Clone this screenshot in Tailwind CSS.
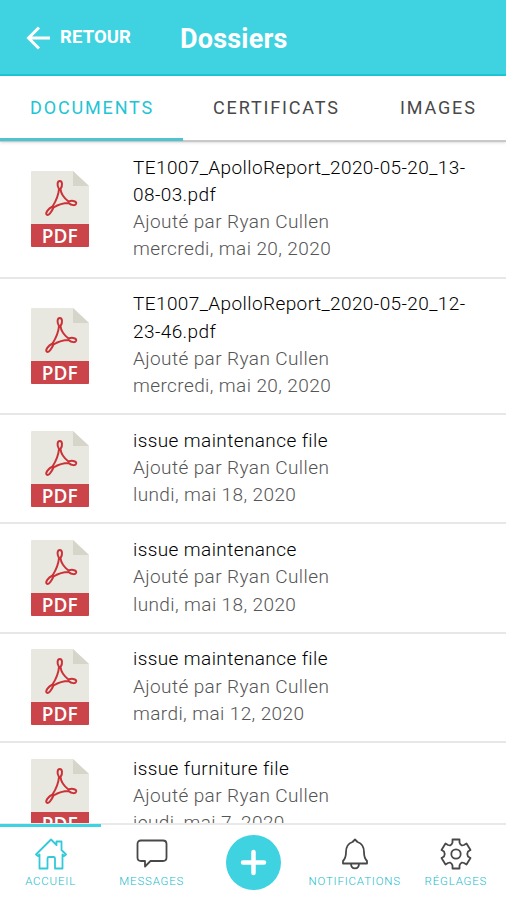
<!DOCTYPE html>
<html lang="fr">

<head>
    <meta charset="UTF-8">
    <meta name="viewport" content="width=device-width, initial-scale=1.0">
    <title>Dossiers</title>
    <script src="https://cdn.jsdelivr.net/npm/@tailwindcss/browser@4"></script>
</head>

<body class="h-screen flex flex-col overflow-hidden bg-white font-['Roboto',sans-serif]">

    <!-- Shared PDF file icon -->
    <svg class="hidden">
        <symbol id="pdf" viewBox="0 0 58 76">
            <path d="M1 0H42L58 15V75a1 1 0 0 1-1 1H1a1 1 0 0 1-1-1V1a1 1 0 0 1 1-1Z" fill="#e9e8e0" />
            <path d="M42 0L58 15H42Z" fill="#d6d5ca" />
            <path d="M0 53H58V75a1 1 0 0 1-1 1H1a1 1 0 0 1-1-1Z" fill="#cb4449" />
            <g fill="none" stroke="#cb3238" stroke-width="2" stroke-linejoin="round">
                <path d="M28 18C25.500 14 26.500 10 28.800 10C31.200 10 32 14 29.500 18C30 23 33 27 37.500 30.500C42 29 45.500 30.500 45.200 32.500C44.700 35 40.500 34.500 37.500 32C32 32 27.500 33.500 22.500 36.500C20.500 41 17.500 45 15.800 43.800C14 42.500 17 37.500 21.500 35.500C25 30 27.500 24.500 28 18Z" />
            </g>
            <text x="28.700" y="71.500" text-anchor="middle" font-family="Open Sans, sans-serif" font-size="19"
                font-weight="600" letter-spacing="0" fill="#fff">PDF</text>
        </symbol>
    </svg>

    <!-- Header -->
    <header class="flex items-center h-[76px] shrink-0 bg-[#3fd2e1] border-b-2 border-[#1cc8d8] text-white">
        <svg class="w-6 h-6 ml-[26px] mt-[2px]" viewBox="0 0 24 24" fill="none" stroke="currentColor" stroke-width="3">
            <path d="M13 1.500L2.500 12L13 22.500M2.500 12H24" />
        </svg>
        <span class="ml-[10px] pt-[2px] w-[120px] text-[18.500px] font-bold tracking-[0.100px]">RETOUR</span>
        <h1 class="pt-[4px] text-[27px] font-bold tracking-[0.200px]">Dossiers</h1>
    </header>

    <!-- Tabs -->
    <nav class="relative z-10 flex h-[66px] shrink-0 border-b-2 border-[#c8c8c8] shadow-sm text-[18px] tracking-[1.850px] text-[#484848]">
        <a class="relative flex items-center w-[183px] pl-[30px] pb-[2px] text-[#22c4d4]">DOCUMENTS
            <span class="absolute left-0 -bottom-[1px] w-full h-[3px] bg-[#4fc4d0]"></span>
        </a>
        <a class="flex items-center w-[187px] pl-[30px] pb-[2px]">CERTIFICATS</a>
        <a class="flex items-center pl-[30px] pb-[2px]">IMAGES</a>
    </nav>

    <!-- Documents -->
    <main class="flex-1 min-h-0 overflow-hidden text-[19px] leading-[27.200px] font-light tracking-[0.400px] text-[#555]">
        <div class="flex items-center h-[136.500px] border-b-2 border-[#e7e7e7]">
            <svg class="w-[58px] h-[76px] ml-[31px] mr-[44px] shrink-0"><use href="#pdf" /></svg>
            <div class="pb-[2px]">
                <p class="text-black">TE1007_ApolloReport_2020-05-20_13-<br>08-03.pdf</p>
                <p>Ajouté par Ryan Cullen</p>
                <p>mercredi, mai 20, 2020</p>
            </div>
        </div>
        <div class="flex items-center h-[136.500px] border-b-2 border-[#e7e7e7]">
            <svg class="w-[58px] h-[76px] ml-[31px] mr-[44px] shrink-0"><use href="#pdf" /></svg>
            <div class="pb-[2px]">
                <p class="text-black">TE1007_ApolloReport_2020-05-20_12-<br>23-46.pdf</p>
                <p>Ajouté par Ryan Cullen</p>
                <p>mercredi, mai 20, 2020</p>
            </div>
        </div>
        <div class="flex items-center h-[109.300px] border-b-2 border-[#e7e7e7]">
            <svg class="w-[58px] h-[76px] ml-[31px] mr-[44px] shrink-0"><use href="#pdf" /></svg>
            <div class="pb-[2px]">
                <p class="text-black">issue maintenance file</p>
                <p>Ajouté par Ryan Cullen</p>
                <p>lundi, mai 18, 2020</p>
            </div>
        </div>
        <div class="flex items-center h-[109.300px] border-b-2 border-[#e7e7e7]">
            <svg class="w-[58px] h-[76px] ml-[31px] mr-[44px] shrink-0"><use href="#pdf" /></svg>
            <div class="pb-[2px]">
                <p class="text-black">issue maintenance</p>
                <p>Ajouté par Ryan Cullen</p>
                <p>lundi, mai 18, 2020</p>
            </div>
        </div>
        <div class="flex items-center h-[109.300px] border-b-2 border-[#e7e7e7]">
            <svg class="w-[58px] h-[76px] ml-[31px] mr-[44px] shrink-0"><use href="#pdf" /></svg>
            <div class="pb-[2px]">
                <p class="text-black">issue maintenance file</p>
                <p>Ajouté par Ryan Cullen</p>
                <p>mardi, mai 12, 2020</p>
            </div>
        </div>
        <div class="flex items-center h-[109.300px] border-b-2 border-[#e7e7e7]">
            <svg class="w-[58px] h-[76px] ml-[31px] mr-[44px] shrink-0"><use href="#pdf" /></svg>
            <div class="pb-[2px]">
                <p class="text-black">issue furniture file</p>
                <p>Ajouté par Ryan Cullen</p>
                <p>jeudi, mai 7, 2020</p>
            </div>
        </div>
    </main>

    <!-- Bottom bar -->
    <footer class="relative grid grid-cols-5 h-[77px] shrink-0 border-t-2 border-[#e9e9e9] bg-white text-[11.500px] leading-4 tracking-[0.800px] font-light text-[#22bccb]">
        <span class="absolute left-0 -top-px w-[101px] h-[3px] bg-[#3fd2e1]"></span>
        <a class="flex flex-col items-center pt-[13px]">
            <svg class="w-8 h-8" viewBox="0 0 32 32" fill="none" stroke="#32c9d9" stroke-width="1.800" stroke-linejoin="round" stroke-linecap="round">
                <path d="M1 16.500L16 1.500L21.500 7V3.500H26.500V12L31 16.500L29 18L27.500 16.500V30.500H20V20.500Q20 19 18.500 19H14Q12.500 19 12.500 20.500V30.500H4.500V16.500L3 18Z" />
            </svg>
            <span class="mt-[3px]">ACCUEIL</span>
        </a>
        <a class="flex flex-col items-center pt-[13px]">
            <svg class="w-8 h-8" viewBox="0 0 32 32" fill="none" stroke="#484848" stroke-width="1.800" stroke-linejoin="round">
                <path d="M5 2.500H27Q30.500 2.500 30.500 6V19.500Q30.500 23 27 23H14.500L9 28.500V23H5Q1.500 23 1.500 19.500V6Q1.500 2.500 5 2.500Z" />
            </svg>
            <span class="mt-[3px]">MESSAGES</span>
        </a>
        <a class="flex flex-col items-center pt-[10px]">
            <svg class="w-[55px] h-[55px] ml-[2px]" viewBox="0 0 55 55">
                <circle cx="27.500" cy="27.500" r="27.500" fill="#3fd2e1" />
                <path d="M27.500 17V38M17 27.500H38" stroke="#fff" stroke-width="4.500" stroke-linecap="round" />
            </svg>
        </a>
        <a class="flex flex-col items-center pl-px pt-[13px]">
            <svg class="w-8 h-8" viewBox="0 0 32 32" fill="none" stroke="#484848" stroke-width="1.800" stroke-linejoin="round">
                <path d="M16 1.500L18.500 4C23 5.500 25 9 25 14C25 19 26 21 28 23V25.500H4V23C6 21 7 19 7 14C7 9 9 5.500 13.500 4ZM12 25.500C12 32 20 32 20 25.500" />
            </svg>
            <span class="mt-[3px]">NOTIFICATIONS</span>
        </a>
        <a class="flex flex-col items-center pl-px pt-[13px]">
            <svg class="w-8 h-8" viewBox="0 0 32 32" fill="none" stroke="#484848" stroke-width="1.800" stroke-linejoin="round">
                <path d="M12.500 1.500H19.500V4.500Q20 6.500 22 7.500L24 7L26.500 5.500L30.500 12L28 13.500Q26.500 16 28 18.500L30.500 20L26.500 26.500L24 25L22 24.500Q20 25.500 19.500 27.500V30.500H12.500V27.500Q12 25.500 10 24.500L8 25L5.500 26.500L1.500 20L4 18.500Q5.500 16 4 13.500L1.500 12L5.500 5.500L8 7L10 7.500Q12 6.500 12.500 4.500Z" />
                <circle cx="16" cy="16" r="4.700" />
            </svg>
            <span class="mt-[3px]">RÉGLAGES</span>
        </a>
    </footer>
</body>

</html>
